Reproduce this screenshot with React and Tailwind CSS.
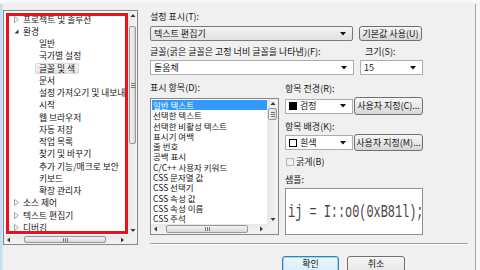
import React from 'react'

const tree = [
  { t: '프로젝트 및 솔루션', lvl: 0 },
  { t: '환경', lvl: 0, open: true },
  { t: '일반', lvl: 1 },
  { t: '국가별 설정', lvl: 1 },
  { t: '글꼴 및 색', lvl: 1, sel: true },
  { t: '문서', lvl: 1 },
  { t: '설정 가져오기 및 내보내기', lvl: 1 },
  { t: '시작', lvl: 1 },
  { t: '웹 브라우저', lvl: 1 },
  { t: '자동 저장', lvl: 1 },
  { t: '작업 목록', lvl: 1 },
  { t: '찾기 및 바꾸기', lvl: 1 },
  { t: '추가 기능/매크로 보안', lvl: 1 },
  { t: '키보드', lvl: 1 },
  { t: '확장 관리자', lvl: 1 },
  { t: '소스 제어', lvl: 0 },
  { t: '텍스트 편집기', lvl: 0 },
  { t: '디버깅', lvl: 0 },
]

const items = [
  '일반 텍스트',
  '선택한 텍스트',
  '선택한 비활성 텍스트',
  '표시기 여백',
  '줄 번호',
  '공백 표시',
  'C/C++ 사용자 키워드',
  'CSS 문자열 값',
  'CSS 선택기',
  'CSS 속성 값',
  'CSS 속성 이름',
  'CSS 주석',
]

const Arrow = ({ dir }) => {
  const d = {
    up: 'M0.5 4 L3 1 L5.5 4 Z',
    down: 'M0.5 1 L3 4 L5.5 1 Z',
    left: 'M4 0.5 L1 3 L4 5.5 Z',
    right: 'M1 0.5 L4 3 L1 5.5 Z',
  }[dir]
  return (
    <svg width="6" height="6" viewBox="0 0 6 6">
      <path d={d} fill="#3a3a3a" />
    </svg>
  )
}

const VScroll = ({ w, top, size }) => (
  <div className={`${w} h-full flex flex-col bg-gradient-to-r from-[#e8e8e8] to-[#f4f4f4]`}>
    <div className="h-[9px] flex items-center justify-center"><Arrow dir="up" /></div>
    <div className="flex-1">
      <div
        className="mx-[1px] rounded-[2px] border border-[#979797] bg-gradient-to-r from-[#f4f4f4] to-[#d9d9d9] flex flex-col items-center justify-center gap-[1px]"
        style={{ marginTop: top, height: size }}
      >
        <div className="w-[4px] h-[1px] bg-[#777]" />
        <div className="w-[4px] h-[1px] bg-[#777]" />
        <div className="w-[4px] h-[1px] bg-[#777]" />
      </div>
    </div>
    <div className="h-[9px] flex items-center justify-center"><Arrow dir="down" /></div>
  </div>
)

const HScroll = ({ left, size }) => (
  <div className="h-full flex-1 flex bg-gradient-to-b from-[#e8e8e8] to-[#f4f4f4]">
    <div className="w-[10px] flex items-center justify-center"><Arrow dir="left" /></div>
    <div className="flex-1 flex">
      <div
        className="my-[1px] rounded-[2px] border border-[#979797] bg-gradient-to-b from-[#f4f4f4] to-[#d9d9d9] flex items-center justify-center gap-[1px]"
        style={{ marginLeft: left, width: size }}
      >
        <div className="w-[1px] h-[4px] bg-[#777]" />
        <div className="w-[1px] h-[4px] bg-[#777]" />
        <div className="w-[1px] h-[4px] bg-[#777]" />
      </div>
    </div>
    <div className="w-[10px] flex items-center justify-center"><Arrow dir="right" /></div>
  </div>
)

const DropArrow = () => (
  <svg width="6" height="4" viewBox="0 0 6 4" className="mr-[6px] shrink-0">
    <path d="M0 0 L6 0 L3 3.5 Z" fill="#111" />
  </svg>
)

const Btn = ({ cls, children }) => (
  <div className={`${cls} flex items-center justify-center rounded-[3px] border border-[#707070] bg-gradient-to-b from-[#f6f6f6] via-[#e8e8e8] to-[#d6d6d6] text-[9px] whitespace-nowrap`}>
    {children}
  </div>
)

const App = () => {
  return (
    <div className="w-[480px] h-[270px] overflow-hidden bg-[#f0f0f0] flex flex-col font-['Noto_Sans_CJK_KR',sans-serif] text-[#151515]">
      <div className="h-[4px] shrink-0 bg-gradient-to-b from-[#f9fbfd] to-[#f1f2f3]" />
      <div className="h-[266px] shrink-0 flex overflow-hidden">
        <div className="w-[3px] bg-gradient-to-r from-[#b9daf1] to-[#d9e9f4]" />

        {/* tree */}
        <div className="pt-[6px]">
          <div className="relative w-[135px] h-[235px] border border-[#828790] bg-white flex flex-col">
            <div className="flex-1 flex min-h-0">
              <div className="flex-1 overflow-hidden pt-[2px] text-[8.75px]">
                {tree.map((r, i) => (
                  <div key={i} className="h-[12.25px] flex items-center whitespace-nowrap">
                    {r.lvl === 0 ? (
                      <>
                        <div className="w-[19px] flex justify-end pr-[4px]">
                          {r.open ? (
                            <svg width="5" height="5" viewBox="0 0 5 5"><path d="M4.5 0.5 L4.5 4.5 L0.5 4.5 Z" fill="#333" /></svg>
                          ) : (
                            <svg width="5" height="7" viewBox="0 0 5 7"><path d="M0.5 0.5 L4.5 3.5 L0.5 6.5 Z" fill="none" stroke="#9a9a9a" strokeWidth="0.9" /></svg>
                          )}
                        </div>
                        <span>{r.t}</span>
                      </>
                    ) : r.sel ? (
                      <span className="ml-[31px] px-[3px] h-[11px] leading-[10px] rounded-[2px] border border-[#d9d9d9] bg-gradient-to-b from-[#f2f2f2] to-[#e5e5e5]">{r.t}</span>
                    ) : (
                      <span className="ml-[35px]">{r.t}</span>
                    )}
                  </div>
                ))}
              </div>
              <VScroll w="w-[9px]" top={6} size={118} />
            </div>
            <div className="h-[9px] flex">
              <HScroll left={10} size={82} />
              <div className="w-[9px] bg-[#f0f0f0]" />
            </div>
            <div className="absolute left-[2px] top-[2px] w-[122px] h-[221px] border-[3px] border-[#e8121c]" />
          </div>
        </div>

        {/* settings */}
        <div className="w-[337px] pl-[12px] pt-[7px] text-[9px]">
          <div className="h-[12px] leading-[12px]">설정 표시(T):</div>
          <div className="mt-[3px] flex h-[15px]">
            <div className="w-[203px] h-[15px] flex items-center rounded-[2px] border border-[#7a7a7a] bg-gradient-to-b from-[#f4f4f4] to-[#e1e1e1]">
              <span className="flex-1 pl-[3px]">텍스트 편집기</span>
              <DropArrow />
            </div>
            <Btn cls="ml-[6px] w-[63px] h-[15px]">기본값 사용(U)</Btn>
          </div>
          <div className="mt-[5px] flex h-[12px] leading-[12px] whitespace-nowrap">
            <div className="w-[209px]">글꼴(굵은 글꼴은 고정 너비 글꼴을 나타냄)(F):</div>
            <div className="pl-[6px]">크기(S):</div>
          </div>
          <div className="mt-[2px] flex h-[15px]">
            <div className="w-[204px] h-[15px] flex items-center border border-[#abadb3] bg-white">
              <span className="flex-1 pl-[3px]">돋움체</span>
              <DropArrow />
            </div>
            <div className="ml-[6px] w-[63px] h-[15px] flex items-center border border-[#abadb3] bg-white">
              <span className="flex-1 pl-[3px]">15</span>
              <DropArrow />
            </div>
          </div>

          <div className="mt-[7px] flex">
            <div className="w-[129px]">
              <div className="h-[12px] leading-[12px]">표시 항목(D):</div>
              <div className="mt-[4px] h-[137px] border border-[#828790] bg-white flex flex-col">
                <div className="flex-1 flex min-h-0">
                  <div className="flex-1 pt-[1px] pl-[1px] overflow-hidden text-[8.5px]">
                    {items.map((t, i) => (
                      <div
                        key={i}
                        className={i === 0 ? 'h-[10.3px] leading-[10.3px] pl-[1px] bg-[#3399ff] text-white whitespace-nowrap' : 'h-[10.3px] leading-[10.3px] pl-[1px] whitespace-nowrap'}
                      >
                        {t}
                      </div>
                    ))}
                  </div>
                  <VScroll w="w-[11px]" top={0} size={12} />
                </div>
                <div className="h-[10px] flex">
                  <HScroll left={5} size={82} />
                  <div className="w-[11px] bg-[#f0f0f0]" />
                </div>
              </div>
            </div>

            <div className="ml-[6px] w-[138px]">
              <div className="mt-[1px] h-[12px] leading-[12px]">항목 전경(R):</div>
              <div className="mt-[2px] h-[18px] flex items-center">
                <div className="w-[68px] h-[15px] flex items-center border border-[#abadb3] bg-white">
                  <div className="ml-[3px] w-[8px] h-[8px] bg-black" />
                  <span className="flex-1 pl-[3px]">검정</span>
                  <DropArrow />
                </div>
                <Btn cls="ml-[1px] w-[69px] h-[18px]">사용자 지정(C)...</Btn>
              </div>
              <div className="mt-[6px] h-[12px] leading-[12px]">항목 배경(K):</div>
              <div className="mt-[1px] h-[17px] flex items-center">
                <div className="w-[68px] h-[15px] flex items-center border border-[#abadb3] bg-white">
                  <div className="ml-[3px] w-[8px] h-[8px] border border-black bg-white" />
                  <span className="flex-1 pl-[3px]">흰색</span>
                  <DropArrow />
                </div>
                <Btn cls="ml-[1px] w-[69px] h-[17px]">사용자 지정(M)...</Btn>
              </div>
              <div className="mt-[5px] h-[12px] flex items-center">
                <div className="ml-[1px] w-[8px] h-[8px] border border-[#b5b5b5] bg-gradient-to-br from-[#e6e6e6] to-[#fafafa]" />
                <span className="ml-[2px] leading-[12px] text-[#222]">굵게(B)</span>
              </div>
              <div className="mt-[6px] h-[12px] leading-[12px]">샘플:</div>
              <div className="mt-[2px] h-[47px] border border-[#8e8f8f] bg-white flex items-center overflow-hidden">
                <span className="ml-[2px] origin-left scale-x-[0.66] whitespace-pre font-['Liberation_Mono',monospace] text-[18px] leading-[20px] text-[#454545]">
                  ij = I::o0(0xB81l);
                </span>
              </div>
            </div>
          </div>

          <div className="mt-[8px] w-[318px] h-[1px] bg-[#a0a0a0]" />
          <div className="w-[318px] h-[1px] bg-white" />

          <div className="mt-[11px] pl-[132px] flex leading-[12px]">
            <div className="w-[57px] h-[22px] flex items-start pt-[1px] justify-center rounded-[3px] border border-[#3c7fb1] bg-gradient-to-b from-[#eaf6fd] to-[#d4ebf9] shadow-[inset_0_0_0_1px_#9fd3f6]">확인</div>
            <div className="ml-[8px] w-[58px] h-[22px] flex items-start pt-[1px] justify-center rounded-[3px] border border-[#707070] bg-gradient-to-b from-[#f4f4f4] to-[#e2e2e2]">취소</div>
          </div>
        </div>

        <div className="w-[1px] bg-[#a7a7a7]" />
        <div className="flex-1 bg-[#f8f8f8]" />
      </div>
    </div>
  )
}

export default App
